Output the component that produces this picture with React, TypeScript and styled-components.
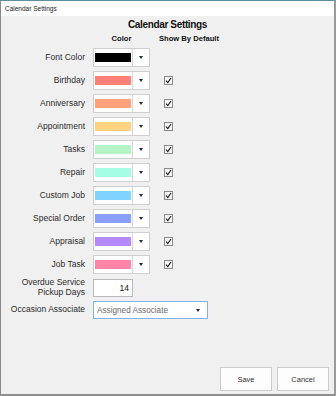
import React from "react";
import styled, { createGlobalStyle } from "styled-components";

const GlobalStyle = createGlobalStyle`
  html, body {
    margin: 0;
    padding: 0;
    background: #ffffff;
  }
  body {
    font-family: "Liberation Sans", Arial, sans-serif;
    color: #222;
  }
`;

const Window = styled.div`
  width: 336px;
  height: 396px;
  box-sizing: border-box;
  display: flex;
  flex-direction: column;
  border-top: 1px solid #5f8f9c;
  border-left: 1px solid #8a8a8a;
  border-right: 2px solid #9a9a9a;
  border-bottom: 2px solid #8f8f8f;
  overflow: hidden;
`;

const TitleBar = styled.div`
  height: 15px;
  flex-shrink: 0;
  background: #ffffff;
  display: flex;
  align-items: center;
  padding-left: 4px;
  font-size: 6.5px;
  color: #1a1a1a;
`;

const Body = styled.div`
  flex: 1;
  background: #f0f0f0;
  display: flex;
  flex-direction: column;
`;

const Heading = styled.div`
  margin-top: 3px;
  height: 12px;
  line-height: 12px;
  text-align: center;
  font-size: 10px;
  font-weight: 700;
  letter-spacing: -0.35px;
  color: #111;
`;

const Grid = styled.div`
  margin-top: 3px;
  display: grid;
  grid-template-columns: 84px 57px 1fr;
  column-gap: 8px;
  row-gap: 4px;
  align-items: center;
`;

const ColHead = styled.div<{ $align?: string }>`
  height: 10px;
  line-height: 10px;
  font-size: 7.6px;
  font-weight: 700;
  color: #111;
  white-space: nowrap;
  text-align: ${({ $align }) => $align || "left"};
  padding-left: ${({ $align }) => ($align === "center" ? "0" : "1px")};
`;

const Label = styled.div`
  text-align: right;
  font-size: 8.5px;
  line-height: 9.5px;
  color: #2a2a2a;
  white-space: nowrap;
`;

const Combo = styled.div`
  width: 57px;
  height: 19px;
  box-sizing: border-box;
  display: flex;
  background: #ffffff;
  border: 1px solid #cfcfcf;
`;

const SwatchCell = styled.div`
  width: 38px;
  display: flex;
  align-items: center;
  justify-content: center;
  border-right: 1px solid #d6d6d6;
`;

const Swatch = styled.div<{ $color: string }>`
  width: 36px;
  height: 9px;
  background: ${({ $color }) => $color};
`;

const DropCell = styled.div`
  flex: 1;
  display: flex;
  align-items: center;
  justify-content: center;
`;

const Arrow = styled.span`
  width: 0;
  height: 0;
  border-left: 2.5px solid transparent;
  border-right: 2.5px solid transparent;
  border-top: 3px solid #1f2a3a;
`;

const CheckCell = styled.div`
  padding-left: 6px;
  display: flex;
  align-items: center;
`;

const CheckBox = styled.span`
  width: 9px;
  height: 9px;
  box-sizing: border-box;
  border: 1px solid #8a8a8a;
  background: #f4f4f4;
  display: flex;
  align-items: center;
  justify-content: center;
`;

const NumberBox = styled.div`
  width: 40px;
  height: 18px;
  box-sizing: border-box;
  background: #ffffff;
  border: 1px solid #b9b9b9;
  display: flex;
  align-items: center;
  justify-content: flex-end;
  padding-right: 3px;
  font-size: 8.5px;
  color: #111;
`;

const Select = styled.div`
  grid-column: span 2;
  width: 115px;
  height: 18px;
  box-sizing: border-box;
  background: #ffffff;
  border: 1px solid #7fb3e6;
  display: flex;
  align-items: center;
  justify-content: space-between;
  padding: 0 7px 0 3px;
  font-size: 8.2px;
  color: #6b6b6b;
`;

const Footer = styled.div`
  margin-top: auto;
  display: flex;
  justify-content: flex-end;
  gap: 5px;
  padding: 0 5px 3px 0;
`;

const Button = styled.button`
  width: 52px;
  height: 24px;
  box-sizing: border-box;
  background: #fdfdfd;
  border: 1px solid #cccccc;
  font-family: "Liberation Sans", Arial, sans-serif;
  font-size: 7.5px;
  color: #333;
  padding: 0;
`;

const rows = [
  { label: "Font Color", color: "#000000", check: false },
  { label: "Birthday", color: "#ff8079", check: true },
  { label: "Anniversary", color: "#ffa07c", check: true },
  { label: "Appointment", color: "#ffd27f", check: true },
  { label: "Tasks", color: "#b3f3c6", check: true },
  { label: "Repair", color: "#a6fde6", check: true },
  { label: "Custom Job", color: "#80d3ff", check: true },
  { label: "Special Order", color: "#8a9fff", check: true },
  { label: "Appraisal", color: "#b48aff", check: true },
  { label: "Job Task", color: "#ff84a6", check: true },
];

const Check = () => (
  <CheckBox>
    <svg width="7" height="7" viewBox="0 0 7 7">
      <path d="M1 3.6 L2.8 5.6 L6 1" fill="none" stroke="#1a1a1a" strokeWidth="1.1" />
    </svg>
  </CheckBox>
);

export default function App() {
  return (
    <>
      <GlobalStyle />
      <Window>
        <TitleBar>Calendar Settings</TitleBar>
        <Body>
          <Heading>Calendar Settings</Heading>
          <Grid>
            <div />
            <ColHead $align="center">Color</ColHead>
            <ColHead>Show By Default</ColHead>
            {rows.map((r) => (
              <React.Fragment key={r.label}>
                <Label>{r.label}</Label>
                <Combo>
                  <SwatchCell>
                    <Swatch $color={r.color} />
                  </SwatchCell>
                  <DropCell>
                    <Arrow />
                  </DropCell>
                </Combo>
                <CheckCell>{r.check && <Check />}</CheckCell>
              </React.Fragment>
            ))}
            <Label>
              Overdue Service
              <br />
              Pickup Days
            </Label>
            <NumberBox>14</NumberBox>
            <div />
            <Label>Occasion Associate</Label>
            <Select>
              <span>Assigned Associate</span>
              <Arrow />
            </Select>
          </Grid>
          <Footer>
            <Button>Save</Button>
            <Button>Cancel</Button>
          </Footer>
        </Body>
      </Window>
    </>
  );
}
